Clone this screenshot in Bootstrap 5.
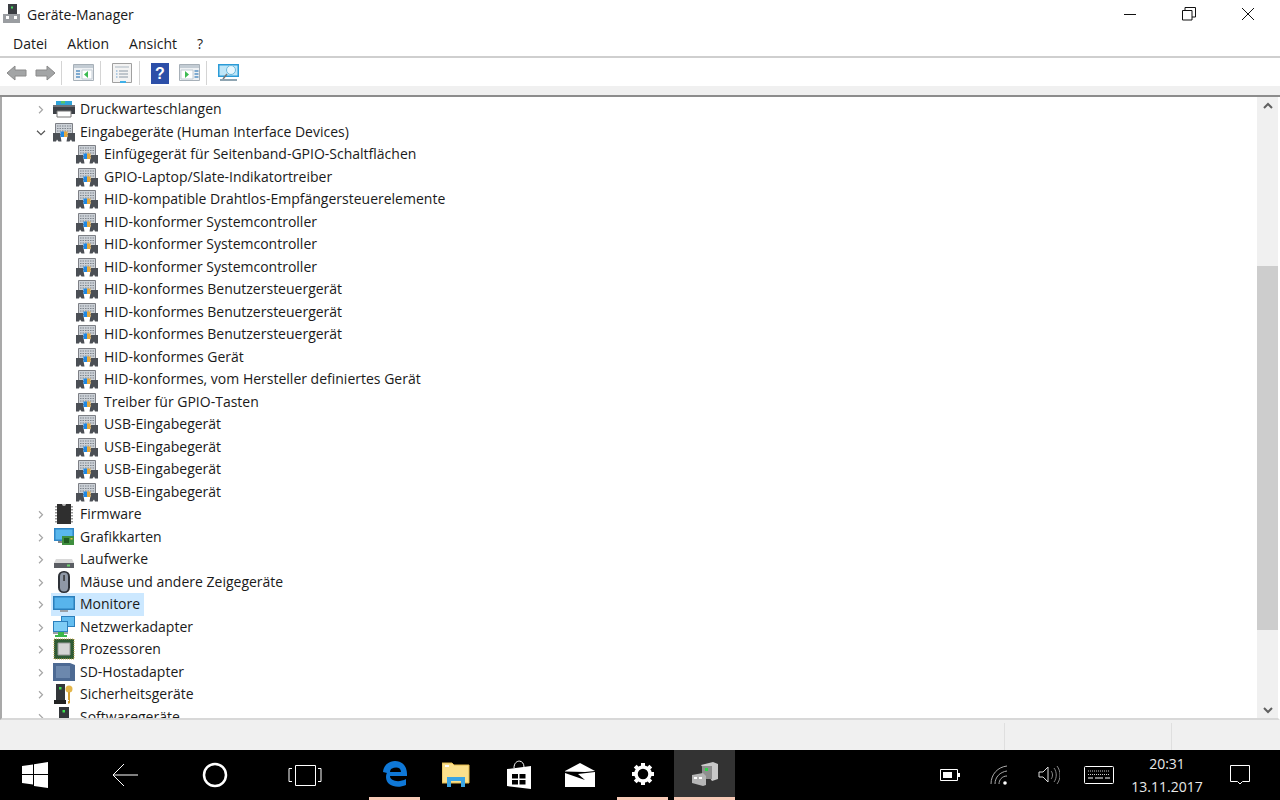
<!DOCTYPE html>
<html lang="de">
<head>
<meta charset="UTF-8">
<title>Geräte-Manager</title>
<link href="https://cdn.jsdelivr.net/npm/bootstrap@5.3.0/dist/css/bootstrap.min.css" rel="stylesheet">
<style>
html, body { height: 800px; overflow: hidden; }
body { font-family: "Open Sans", "Noto Sans", sans-serif; font-size: 14px; color: #1a1a1a; background: #fff; }
.app-shell { height: 800px; }
.app-shell > * { flex: none; }
.title-row { height: 30px; padding: 0 0 2px 3px; }
.title-row .app-name { margin-left: 7px; }
.win-group { margin-right: 3px; align-self: flex-start; }
.win-btn { width: 59px; height: 28px; }
.menu-row { height: 28px; padding-left: 13px; gap: 20px; border-bottom: 2px solid #cfcfcf; }
.tool-row { height: 28px; padding: 2px 0 0 6px; }
.tool-arrow { margin-left: 8px; }
.tool-sep { width: 1px; height: 24px; background: #d4d4d4; margin: 0 11px 0 5px; }
.tool-next { margin-left: 10px; }
.tool-gap { height: 11px; background: #f0f0f0; border-bottom: 2px solid #8c8c8c; }
.tree-wrap { height: 623px; border-left: 2px solid #a9a9a9; border-right: 2px solid #fff; border-bottom: 2px solid #d8d8d8; }
.tree-list { overflow: hidden; padding-top: 1px; }
.tree-item { height: 22.5px; white-space: nowrap; line-height: 22.5px; flex: none; }
.tree-item.top-level { padding-left: 33px; }
.tree-item.child { padding-left: 74px; }
.tree-twist { width: 12px; height: 22.5px; margin-right: 6px; flex: none; }
.tree-ico { width: 22px; height: 22px; flex: none; margin-right: 5px; }
.child .tree-ico { margin-right: 6px; }
.tree-sel { background: #cce8ff; height: 22.5px; padding: 0 4px 0 2px; margin-left: -2px; }
.scroll-col { width: 21px; background: #f0f0f0; flex: none; }
.scroll-btn { height: 17px; flex: none; }
.scroll-up { height: 152px; flex: none; }
.scroll-thumb { height: 364px; background: #cdcdcd; flex: none; }
.status-row { height: 30px; background: #f0f0f0; }
.status-cell { border-left: 1px solid #dfdfdf; height: 27px; margin-top: 3px; }
.cell-a { width: 1004px; border-left: 0; }
.cell-b { width: 167px; }
.cell-c { width: 106px; }
.task-bar { height: 50px; background: #000; color: #fff; }
.task-slot { height: 50px; flex: none; }
.task-slot.open-app { border-bottom: 3px solid #f7c9b6; }
.task-slot.active-app { background: #333; }
.slot-start { width: 70px; }
.slot-back { width: 110px; }
.slot-cortana { width: 70px; }
.slot-view { width: 110px; }
.slot-edge { width: 51px; margin-left: 9px; }
.slot-explorer { width: 40px; margin-left: 16px; }
.slot-store { width: 55px; margin-left: 15px; }
.slot-mail { width: 56px; margin-left: 6px; }
.slot-gear { width: 51px; margin-left: 9px; }
.slot-devmgr { width: 61px; margin-left: 6px; }
.tray-wifi { margin-left: 30px; }
.tray-vol { margin-left: 28px; }
.tray-kbd { margin-left: 24px; }
.clock-box { width: 92px; line-height: 23px; color: #e8e8e8; margin-left: 7px; }
.tray-note { margin: 0 30px 0 17px; }
</style>
</head>
<body>
<svg width="0" height="0" class="d-block">
  <defs>
    <symbol id="i-twist-r" viewBox="0 0 12 22"><path d="M4 8l3.500 3.500L4 15" fill="none" stroke="#a6a6a6" stroke-width="1.200"/></symbol>
    <symbol id="i-twist-d" viewBox="0 0 12 22"><path d="M2 9.500l4 4 4-4" fill="none" stroke="#555" stroke-width="1.200"/></symbol>
    <symbol id="i-hid" viewBox="0 0 22 22">
      <path d="M2.500 2.500h17v11h-17z" fill="#ccd1d7" stroke="#7d7f85"/>
      <path d="M4 5h14M4 7.500h14M4 10h14" stroke="#7f858d" stroke-dasharray="1.500 1"/>
      <path d="M0 12h7l1.500 8.500H5.500L4 18.500 3 20.500H0z" fill="#4b4f55"/>
      <path d="M15 12h7v8.500h-3L18 18.500l-1.500 2h-3z" fill="#4b4f55"/>
      <path d="M7.500 10.500h3.500v5.500H7.500z" fill="#1e88e5"/>
      <path d="M11 10.500h3.500v5.500H11z" fill="#e3a83f"/>
    </symbol>
    <symbol id="i-printer" viewBox="0 0 22 22">
      <path d="M3 3h16v5H3z" fill="#2fa3d9"/><path d="M8 3h4v2.500H8z" fill="#57c46a"/>
      <path d="M0 7h22v9H0z" fill="#3d4046"/><path d="M0 7h22v2H0z" fill="#6d7077"/>
      <path d="M4 13h14v6H4z" fill="#fff" stroke="#777"/>
    </symbol>
    <symbol id="i-chip" viewBox="0 0 22 22">
      <path d="M4 1h14v20H4z" fill="#2f2f2f"/>
      <path d="M2 3h2v1.500H2zM2 6h2v1.500H2zM2 9h2v1.500H2zM2 12h2v1.500H2zM2 15h2v1.500H2zM2 18h2v1.500H2zM18 3h2v1.500h-2zM18 6h2v1.500h-2zM18 9h2v1.500h-2zM18 12h2v1.500h-2zM18 15h2v1.500h-2zM18 18h2v1.500h-2z" fill="#9a9a9a"/>
      <path d="M9 1a2 2 0 0 0 4 0z" fill="#bdbdbd"/>
    </symbol>
    <symbol id="i-gpu" viewBox="0 0 22 22">
      <path d="M1 2h20v13H1z" fill="#2f86c6"/><path d="M2.500 3.500h17v10h-17z" fill="#59b7ec"/>
      <path d="M9 10h12v9H9z" fill="#3f8f3f"/><path d="M11 12h5v5h-5z" fill="#1f5b22"/><path d="M17.500 12h2v1.500h-2z" fill="#e2c14a"/>
      <path d="M5 15h4v2H5z" fill="#888"/>
    </symbol>
    <symbol id="i-drive" viewBox="0 0 22 22">
      <path d="M3 11h16l2 4H1z" fill="#d8d8d8"/><path d="M1 15h20v5H1z" fill="#5a5d63"/><path d="M14 16.500h3v2h-3z" fill="#6fd26f"/>
    </symbol>
    <symbol id="i-mouse" viewBox="0 0 22 22">
      <rect x="5" y="0" width="12" height="22" rx="5.500" fill="#2f3238"/>
      <rect x="7" y="1.500" width="8" height="19" rx="4" fill="#8f98a6"/>
      <path d="M10.300 4h1.500v6h-1.500z" fill="#333"/>
    </symbol>
    <symbol id="i-monitor" viewBox="0 0 22 22">
      <path d="M0 3h22v14H0z" fill="#2b7fbc"/><path d="M1.500 4.500h19v11h-19z" fill="#58b4ec"/>
      <path d="M7 17h8v2H7z" fill="#9aa0a6"/>
    </symbol>
    <symbol id="i-net" viewBox="0 0 22 22">
      <path d="M8 0h14v11H8z" fill="#2b7fbc"/><path d="M9 1h12v9H9z" fill="#63bdf0"/>
      <path d="M0 5h15v11H0z" fill="#2b7fbc"/><path d="M1 6h13v9H1z" fill="#7fcdf5"/>
      <path d="M0 16h15v2H0z" fill="#9aa0a6"/><path d="M5 16h6v4H5zM2 19h12v2H2z" fill="#3db74a"/>
    </symbol>
    <symbol id="i-cpu" viewBox="0 0 22 22">
      <path d="M1 1h20v20H1z" fill="#2f5a35"/><path d="M1 1h20v20H1z" fill="none" stroke="#c2a64a" stroke-dasharray="1 1"/>
      <path d="M5 5h12v12H5z" fill="#d4d4d4" stroke="#999"/>
    </symbol>
    <symbol id="i-sd" viewBox="0 0 22 22">
      <path d="M0 2h17l5 2v16H0z" fill="#4d6a93"/><path d="M3 5h14v12H3z" fill="#6c88ad"/>
    </symbol>
    <symbol id="i-sec" viewBox="0 0 22 22">
      <path d="M3 1h9v16H3z" fill="#33363a"/><path d="M6 4h2.500v2.500H6z" fill="#3be04d"/><path d="M1 17h12v4H1z" fill="#222"/>
      <circle cx="16" cy="6" r="3.500" fill="#e4b64a"/><path d="M15 9h2v11l-1.500 1-.5-1v-2h1v-1h-1z" fill="#d49f35"/>
    </symbol>
    <symbol id="i-soft" viewBox="0 0 22 22">
      <path d="M6 1h10v15H6z" fill="#33363a"/><path d="M9.500 4H12v2.500H9.500z" fill="#3be04d"/><path d="M4 16h14v4H4z" fill="#222"/>
    </symbol>
  </defs>
</svg>

<div class="app-shell d-flex flex-column">
  <!-- Title bar -->
  <div class="title-row d-flex align-items-center">
    <svg width="17" height="20" viewBox="0 0 17 20"><path d="M5 0h9v10H5z" fill="#3a3d42"/><path d="M8 2.500h2v2H8z" fill="#45d860"/><path d="M0 10h17v9H0z" fill="#9a9da1"/><path d="M3 12h3v3H3zM11 12h3v3h-3z" fill="#fff"/></svg>
    <span class="app-name">Geräte-Manager</span>
    <div class="win-group ms-auto d-flex">
      <div class="win-btn d-flex align-items-center justify-content-center"><svg width="14" height="14" viewBox="0 0 14 14"><path d="M1 7.500h12" stroke="#111"/></svg></div>
      <div class="win-btn d-flex align-items-center justify-content-center"><svg width="14" height="14" viewBox="0 0 14 14"><path d="M.5 3.500h9.500v9.500H.5z M3 3.500V.5h10.500V10H10" fill="none" stroke="#111"/></svg></div>
      <div class="win-btn d-flex align-items-center justify-content-center"><svg width="14" height="14" viewBox="0 0 14 14"><path d="M1 1l12 12M13 1L1 13" stroke="#111"/></svg></div>
    </div>
  </div>
  <!-- Menu -->
  <div class="menu-row d-flex align-items-center">
    <span>Datei</span><span>Aktion</span><span>Ansicht</span><span>?</span>
  </div>
  <!-- Toolbar -->
  <div class="tool-row d-flex align-items-center">
    <svg width="21" height="18" viewBox="0 0 21 18"><path d="M1 9l8-7v4h11v6H9v4z" fill="#a3a5a6" stroke="#8a8a8a"/></svg>
    <svg class="tool-arrow" width="21" height="18" viewBox="0 0 21 18"><path d="M20 9l-8-7v4H1v6h11v4z" fill="#a3a5a6" stroke="#8a8a8a"/></svg>
    <div class="tool-sep"></div>
    <svg width="22" height="18" viewBox="0 0 22 18"><path d="M.5.500h20v16H.5z" fill="#eef1f4" stroke="#a7b0b8"/><path d="M1 1h19v3H1z" fill="#c3ccd4"/><path d="M9 6h10v9H9z" fill="#fff" stroke="#c3ccd4"/><path d="M3 7h4M3 10h4M3 13h4" stroke="#5a93c4" stroke-width="1.500"/><path d="M15 7v7l-4-3.500z" fill="#3dbb52"/></svg>
    <div class="tool-sep"></div>
    <svg width="22" height="21" viewBox="0 0 22 21"><path d="M.5.500h19v19H.5z" fill="#f3f3f3" stroke="#a0a0a0"/><path d="M3 3h14v2H3z" fill="#cfd5da"/><path d="M7 8h9M7 11h9M7 14h9" stroke="#8a98a5"/><path d="M4 8h1.500M4 11h1.500M4 14h1.500" stroke="#6ca1d0"/><path d="M8 18h6v2H8z" fill="#3fb0e8"/></svg>
    <div class="tool-sep"></div>
    <svg width="18" height="21" viewBox="0 0 18 21"><path d="M0 0h18v21H0z" fill="#2c4fa8"/><text x="9" y="16" text-anchor="middle" font-family="Liberation Sans, sans-serif" font-weight="700" font-size="16" fill="#fff">?</text></svg>
    <svg class="tool-next" width="22" height="18" viewBox="0 0 22 18"><path d="M.5.500h20v16H.5z" fill="#eef1f4" stroke="#a7b0b8"/><path d="M1 1h19v3H1z" fill="#c3ccd4"/><path d="M2 6h12v9H2z" fill="#fff" stroke="#c3ccd4"/><path d="M15.500 7h4M15.500 10h4M15.500 13h4" stroke="#5a93c4" stroke-width="1.500"/><path d="M6 7v7l4-3.500z" fill="#3dbb52"/></svg>
    <div class="tool-sep"></div>
    <svg width="22" height="20" viewBox="0 0 22 20"><path d="M0 1h21v13H0z" fill="#2b9bd7"/><path d="M1.500 2.500h18v10h-18z" fill="#bfe6f8"/><circle cx="13" cy="7" r="4.500" fill="#e6f6fd" stroke="#6bb9dd"/><path d="M9 11l-4 5" stroke="#777" stroke-width="1.500"/><path d="M2 16h17v2H2z" fill="#8fa5b2"/></svg>
  </div>
  <div class="tool-gap"></div>
  <!-- Tree with scrollbar -->
  <div class="tree-wrap d-flex">
    <div class="tree-list flex-grow-1 d-flex flex-column">
      <div class="tree-item top-level d-flex align-items-center"><svg class="tree-twist"><use href="#i-twist-r"/></svg><svg class="tree-ico"><use href="#i-printer"/></svg><span>Druckwarteschlangen</span></div>
      <div class="tree-item top-level d-flex align-items-center"><svg class="tree-twist"><use href="#i-twist-d"/></svg><svg class="tree-ico"><use href="#i-hid"/></svg><span>Eingabegeräte (Human Interface Devices)</span></div>
      <div class="tree-item child d-flex align-items-center"><svg class="tree-ico"><use href="#i-hid"/></svg><span>Einfügegerät für Seitenband-GPIO-Schaltflächen</span></div>
      <div class="tree-item child d-flex align-items-center"><svg class="tree-ico"><use href="#i-hid"/></svg><span>GPIO-Laptop/Slate-Indikatortreiber</span></div>
      <div class="tree-item child d-flex align-items-center"><svg class="tree-ico"><use href="#i-hid"/></svg><span>HID-kompatible Drahtlos-Empfängersteuerelemente</span></div>
      <div class="tree-item child d-flex align-items-center"><svg class="tree-ico"><use href="#i-hid"/></svg><span>HID-konformer Systemcontroller</span></div>
      <div class="tree-item child d-flex align-items-center"><svg class="tree-ico"><use href="#i-hid"/></svg><span>HID-konformer Systemcontroller</span></div>
      <div class="tree-item child d-flex align-items-center"><svg class="tree-ico"><use href="#i-hid"/></svg><span>HID-konformer Systemcontroller</span></div>
      <div class="tree-item child d-flex align-items-center"><svg class="tree-ico"><use href="#i-hid"/></svg><span>HID-konformes Benutzersteuergerät</span></div>
      <div class="tree-item child d-flex align-items-center"><svg class="tree-ico"><use href="#i-hid"/></svg><span>HID-konformes Benutzersteuergerät</span></div>
      <div class="tree-item child d-flex align-items-center"><svg class="tree-ico"><use href="#i-hid"/></svg><span>HID-konformes Benutzersteuergerät</span></div>
      <div class="tree-item child d-flex align-items-center"><svg class="tree-ico"><use href="#i-hid"/></svg><span>HID-konformes Gerät</span></div>
      <div class="tree-item child d-flex align-items-center"><svg class="tree-ico"><use href="#i-hid"/></svg><span>HID-konformes, vom Hersteller definiertes Gerät</span></div>
      <div class="tree-item child d-flex align-items-center"><svg class="tree-ico"><use href="#i-hid"/></svg><span>Treiber für GPIO-Tasten</span></div>
      <div class="tree-item child d-flex align-items-center"><svg class="tree-ico"><use href="#i-hid"/></svg><span>USB-Eingabegerät</span></div>
      <div class="tree-item child d-flex align-items-center"><svg class="tree-ico"><use href="#i-hid"/></svg><span>USB-Eingabegerät</span></div>
      <div class="tree-item child d-flex align-items-center"><svg class="tree-ico"><use href="#i-hid"/></svg><span>USB-Eingabegerät</span></div>
      <div class="tree-item child d-flex align-items-center"><svg class="tree-ico"><use href="#i-hid"/></svg><span>USB-Eingabegerät</span></div>
      <div class="tree-item top-level d-flex align-items-center"><svg class="tree-twist"><use href="#i-twist-r"/></svg><svg class="tree-ico"><use href="#i-chip"/></svg><span>Firmware</span></div>
      <div class="tree-item top-level d-flex align-items-center"><svg class="tree-twist"><use href="#i-twist-r"/></svg><svg class="tree-ico"><use href="#i-gpu"/></svg><span>Grafikkarten</span></div>
      <div class="tree-item top-level d-flex align-items-center"><svg class="tree-twist"><use href="#i-twist-r"/></svg><svg class="tree-ico"><use href="#i-drive"/></svg><span>Laufwerke</span></div>
      <div class="tree-item top-level d-flex align-items-center"><svg class="tree-twist"><use href="#i-twist-r"/></svg><svg class="tree-ico"><use href="#i-mouse"/></svg><span>Mäuse und andere Zeigegeräte</span></div>
      <div class="tree-item top-level d-flex align-items-center"><svg class="tree-twist"><use href="#i-twist-r"/></svg><div class="tree-sel d-flex align-items-center"><svg class="tree-ico"><use href="#i-monitor"/></svg><span>Monitore</span></div></div>
      <div class="tree-item top-level d-flex align-items-center"><svg class="tree-twist"><use href="#i-twist-r"/></svg><svg class="tree-ico"><use href="#i-net"/></svg><span>Netzwerkadapter</span></div>
      <div class="tree-item top-level d-flex align-items-center"><svg class="tree-twist"><use href="#i-twist-r"/></svg><svg class="tree-ico"><use href="#i-cpu"/></svg><span>Prozessoren</span></div>
      <div class="tree-item top-level d-flex align-items-center"><svg class="tree-twist"><use href="#i-twist-r"/></svg><svg class="tree-ico"><use href="#i-sd"/></svg><span>SD-Hostadapter</span></div>
      <div class="tree-item top-level d-flex align-items-center"><svg class="tree-twist"><use href="#i-twist-r"/></svg><svg class="tree-ico"><use href="#i-sec"/></svg><span>Sicherheitsgeräte</span></div>
      <div class="tree-item top-level d-flex align-items-center"><svg class="tree-twist"><use href="#i-twist-r"/></svg><svg class="tree-ico"><use href="#i-soft"/></svg><span>Softwaregeräte</span></div>
    </div>
    <div class="scroll-col d-flex flex-column">
      <div class="scroll-btn d-flex align-items-center justify-content-center"><svg width="10" height="8" viewBox="0 0 10 8"><path d="M1 6l4-4 4 4" fill="none" stroke="#606060" stroke-width="2"/></svg></div>
      <div class="scroll-up"></div>
      <div class="scroll-thumb"></div>
      <div class="flex-grow-1"></div>
      <div class="scroll-btn d-flex align-items-center justify-content-center"><svg width="10" height="8" viewBox="0 0 10 8"><path d="M1 2l4 4 4-4" fill="none" stroke="#606060" stroke-width="2"/></svg></div>
    </div>
  </div>
  <!-- Status bar -->
  <div class="status-row d-flex">
    <div class="status-cell cell-a"></div>
    <div class="status-cell cell-b"></div>
    <div class="status-cell cell-c"></div>
  </div>
  <!-- Taskbar -->
  <div class="task-bar d-flex">
    <div class="task-slot slot-start d-flex align-items-center justify-content-center"><svg width="26" height="26" viewBox="0 0 26 26"><path d="M0 4l11-1.500V12H0zM12 2.300L26 0v12H12zM0 13h11v9.500L0 21zM12 13h14v13l-14-2z" fill="#fff"/></svg></div>
    <div class="task-slot slot-back d-flex align-items-center justify-content-center"><svg width="26" height="24" viewBox="0 0 26 24"><path d="M26 12H1M12 1L1 12l11 11" fill="none" stroke="#fff"/></svg></div>
    <div class="task-slot slot-cortana d-flex align-items-center justify-content-center"><svg width="26" height="26" viewBox="0 0 26 26"><circle cx="13" cy="13" r="11" fill="none" stroke="#fff" stroke-width="2.500"/></svg></div>
    <div class="task-slot slot-view d-flex align-items-center justify-content-center"><svg width="34" height="24" viewBox="0 0 34 24"><path d="M7.500 2.500h20v20h-20z" fill="none" stroke="#fff"/><path d="M4 5.500H1v13h3M30 5.500h3v13h-3" fill="none" stroke="#fff"/></svg></div>
    <div class="task-slot slot-edge open-app d-flex align-items-center justify-content-center"><svg width="26" height="28" viewBox="0 0 26 28"><path d="M1 12C2 4 8 1 13 1c7 0 12 5 12 13v2H8c0 5 9 7 16 3v6c-9 4-20 1-20-8 0-3 1-5 3-7 2-2 4-3 4-3-2 2-3 3-3 5h11c0-6-9-6-14 1z" fill="#0f78d7"/></svg></div>
    <div class="task-slot slot-explorer d-flex align-items-center justify-content-center"><svg width="28" height="26" viewBox="0 0 28 26"><path d="M0 1h10l2 2h15v18H0z" fill="#fbe08c" stroke="#e3b94d"/><path d="M5 15h18v10h-4v-6H9v6H5z" fill="#3aa4e4"/><path d="M3 3h4v2H3z" fill="#fff"/></svg></div>
    <div class="task-slot slot-store d-flex align-items-center justify-content-center"><svg width="26" height="30" viewBox="0 0 26 30"><path d="M1 9l24-3v23L1 26z" fill="#fff"/><path d="M8 8c0-9 10-9 10-1" fill="none" stroke="#fff"/><path d="M6 14h6v4.500H6zM13.500 14h6v4.500h-6zM6 20h6v4.500H6zM13.500 20h6v4.500h-6z" fill="#000"/></svg></div>
    <div class="task-slot slot-mail d-flex align-items-center justify-content-center"><svg width="30" height="24" viewBox="0 0 30 24"><path d="M0 8L15 0l15 8-10 1-20-.5z" fill="#fff"/><path d="M0 9l13 6 8-3 6 6L10 9z" fill="#000"/><path d="M0 10l20 7-7-6 17-2v15H0z" fill="#fff"/></svg></div>
    <div class="task-slot slot-gear open-app d-flex align-items-center justify-content-center"><svg width="24" height="24" viewBox="0 0 24 24"><circle cx="12" cy="12" r="7" fill="none" stroke="#fff" stroke-width="3.500"/><path d="M12 1v5M12 18v5M1 12h5M18 12h5M4.200 4.200l3.500 3.500M16.300 16.300l3.500 3.500M19.800 4.200l-3.500 3.500M7.700 16.300l-3.500 3.500" stroke="#fff" stroke-width="4"/></svg></div>
    <div class="task-slot slot-devmgr open-app active-app d-flex align-items-center justify-content-center"><svg width="28" height="26" viewBox="0 0 28 26"><path d="M10 4l12-3 5 2v15l-6 2z" fill="#c9c9c9"/><path d="M11 5h10v13H11z" fill="#8e8e8e"/><path d="M14 7h3v3h-3z" fill="#2fd24a"/><path d="M1 14l11-2 3 3v9l-3 1-11-3z" fill="#b5b5b5"/><path d="M3 16h3v2H3zM8 16h3v2H8z" fill="#fff"/></svg></div>
    <div class="ms-auto d-flex align-items-center">
      <svg width="20" height="12" viewBox="0 0 20 12"><path d="M.5.500h17v11H.5z" fill="none" stroke="#fff"/><path d="M3 3h9v6H3z" fill="#fff"/><path d="M18 4h2v4h-2z" fill="#fff"/></svg>
      <svg class="tray-wifi" width="20" height="20" viewBox="0 0 20 20"><path d="M1 19C1 9 8 2 17 1M5 19c0-7 5-12 12-13M9 19c0-4 3-8 8-8" fill="none" stroke="#aaa"/><circle cx="15" cy="18" r="1.800" fill="#fff"/></svg>
      <svg class="tray-vol" width="22" height="20" viewBox="0 0 22 20"><path d="M1 7h4l5-5v15l-5-5H1z" fill="none" stroke="#ddd"/><path d="M13 6c2 2 2 6 0 8M16 3c3 4 3 10 0 14M19 1c4 5 4 13 0 18" fill="none" stroke="#888"/></svg>
      <svg class="tray-kbd" width="30" height="18" viewBox="0 0 30 18"><rect x=".5" y=".5" width="29" height="17" rx="1" fill="none" stroke="#fff"/><path d="M4 5h22M4 8.500h22" stroke="#ccc" stroke-dasharray="1 1"/><path d="M4 12h5M11 12h8M21 12h5" stroke="#fff"/></svg>
      <div class="clock-box text-center">20:31<br>13.11.2017</div>
      <svg class="tray-note" width="20" height="20" viewBox="0 0 20 20"><path d="M.5.500h19v16h-7l-2.500 2.500L7.500 16.500h-7z" fill="none" stroke="#fff"/></svg>
    </div>
  </div>
</div>
</body>
</html>
